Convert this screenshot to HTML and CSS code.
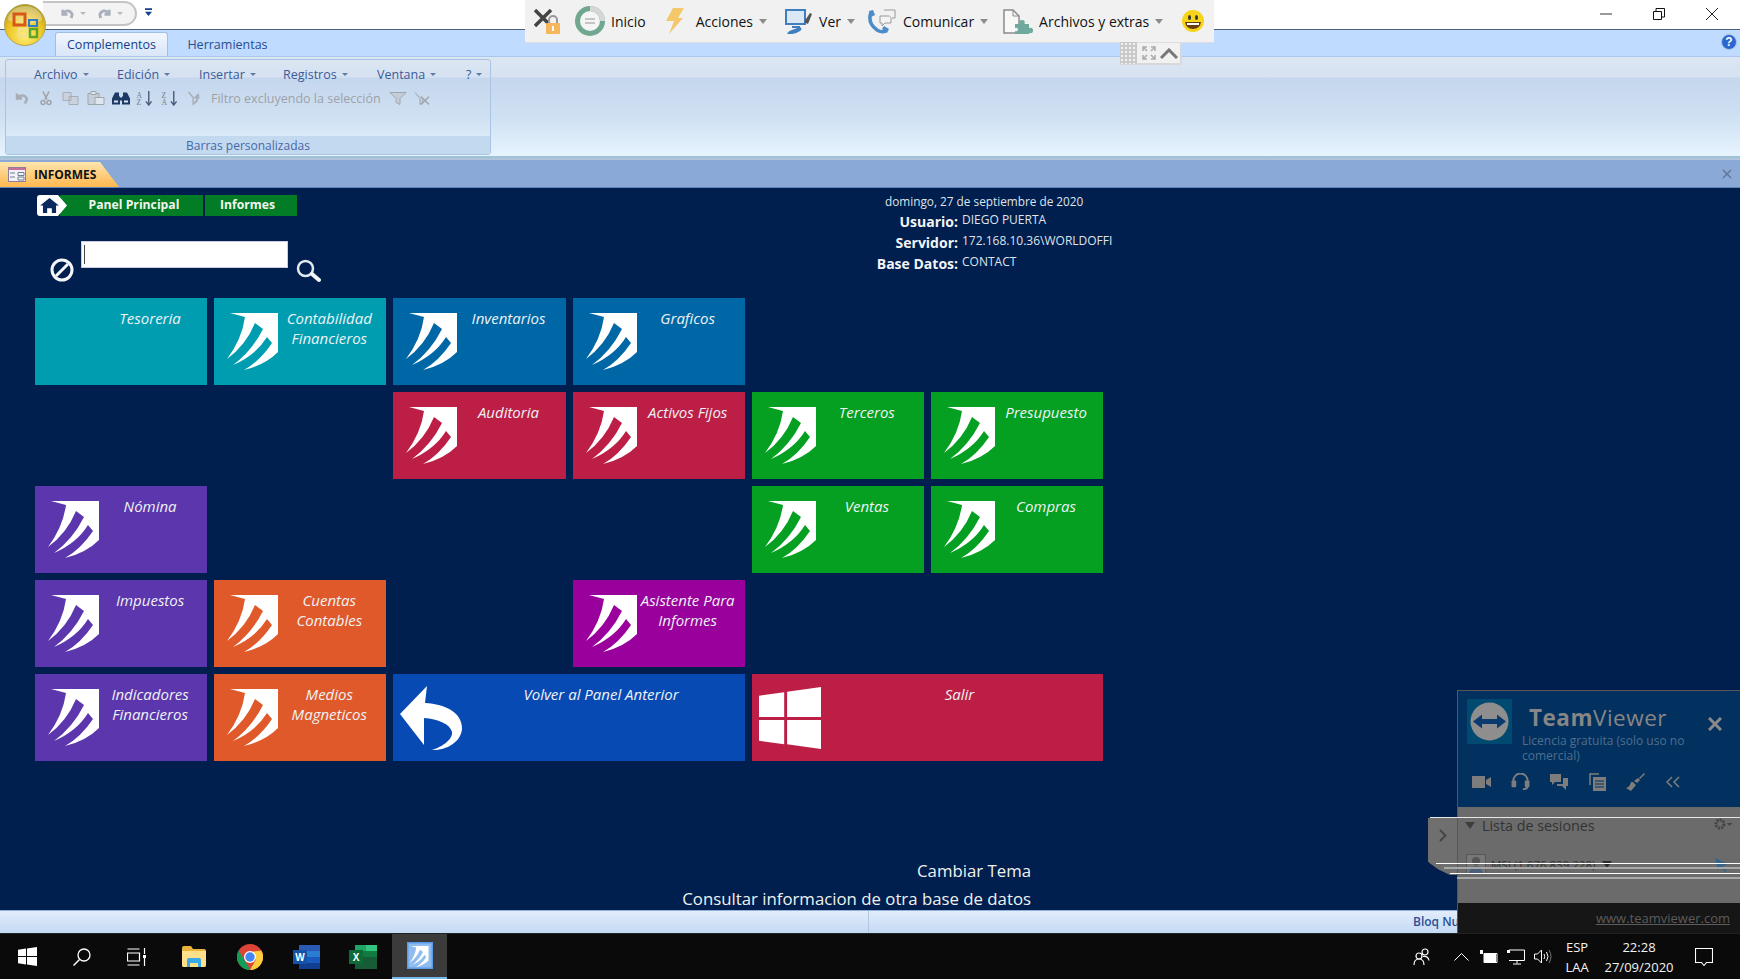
FILE: index.html
```html
<!DOCTYPE html>
<html lang="es">
<head>
<meta charset="utf-8">
<title>Informes</title>
<link rel="stylesheet" href="styles.css">
</head>
<body>
<svg class="defs" width="0" height="0" aria-hidden="true">
  <symbol id="wo" viewBox="0 0 70 70">
    <path fill="#fff" d="M10 8H58V47Q45 60 24 65Q40 56 52 38L47 32Q36 50 13 60Q32 46 43 24L35 18Q26 40 7 54Q22 34 25 12Z"/>
  </symbol>
</svg>

<header class="titlebar">
  <div class="qat">
    <svg class="qat-i" viewBox="0 0 16 16"><path fill="none" stroke="#a9b0bb" stroke-width="3" d="M3 4v5h5M3.500 8.500C6 4 11 4 13 9l-1 4"/></svg>
    <span class="qat-c"></span>
    <svg class="qat-i qat-r" viewBox="0 0 16 16"><path fill="none" stroke="#a9b0bb" stroke-width="3" d="M13 4v5H8M12.500 8.500C10 4 5 4 3 9l1 4"/></svg>
    <span class="qat-c"></span>
  </div>
  <svg class="qat-more" viewBox="0 0 8 10"><path fill="#15428b" d="M0 0h8v2H0zM0 4h8L4 9z"/></svg>
  <div class="winbtns">
    <svg viewBox="0 0 12 12"><path stroke="#777" stroke-width="1.500" d="M0 6h12"/></svg>
    <svg viewBox="0 0 12 12"><path fill="none" stroke="#111" d="M.5 3.500h8v8h-8zM3 3V.5h8.500V9H9"/></svg>
    <svg viewBox="0 0 12 12"><path stroke="#222" d="M0 0l12 12M12 0L0 12"/></svg>
  </div>
</header>

<section class="ribbon">
  <nav class="tabs">
    <span class="tab on">Complementos</span>
    <span class="tab">Herramientas</span>
    <svg class="help" viewBox="0 0 16 16"><circle cx="8" cy="8" r="7.500" fill="#2c67cf" stroke="#a9c4e6"/><text x="8" y="12" text-anchor="middle" class="help-t">?</text></svg>
  </nav>
  <div class="panel">
    <div class="group">
      <div class="grp-body">
        <div class="menus">
          <span class="m m1">Archivo</span><span class="m m2">Edición</span><span class="m m3">Insertar</span><span class="m m4">Registros</span><span class="m m5">Ventana</span><span class="m m6">?</span>
        </div>
        <div class="tools">
          <svg class="t tw14" viewBox="0 0 14 14"><path fill="none" stroke="#a8adb5" stroke-width="2.500" d="M2 2v5h5M2.500 6.500C5 3 10 3 12 7.500L10 12"/></svg>
          <svg class="t tw12 ml11" viewBox="0 0 12 14"><path fill="none" stroke="#a0a4aa" stroke-width="1.600" d="M3 0l4 8M9 0L5 8"/><circle cx="3" cy="11" r="2" fill="none" stroke="#a0a4aa" stroke-width="1.500"/><circle cx="9" cy="11" r="2" fill="none" stroke="#a0a4aa" stroke-width="1.500"/></svg>
          <svg class="t tw17 ml10" viewBox="0 0 17 14"><path fill="#c9d2de" stroke="#a8adb5" d="M1 1h8v8H1zM7 5h9v8H7z"/></svg>
          <svg class="t tw18 ml8" viewBox="0 0 18 14"><path fill="#c5cfdb" stroke="#a0a5ac" d="M1 2h11v11H1z"/><path fill="#dfe6ee" stroke="#a0a5ac" d="M8 6h9v7H8zM4 0h5v3H4z"/></svg>
          <svg class="t tw18 ml7" viewBox="0 0 18 14"><path fill="#1d3a66" d="M3 1h4v4h1v8H0V7zM11 1h4l3 6v6h-8V5h1zM8 6h2v3H8z"/><path fill="#dbe5f2" d="M2 9h4v2H2zM12 9h4v2h-4z"/></svg>
          <svg class="t tw18 ml6" viewBox="0 0 18 16"><text x="0" y="7" class="az">A</text><text x="0" y="15" class="az">Z</text><path stroke="#4a5e7c" stroke-width="1.500" fill="none" d="M13 0v14M10 11l3 4 3-4"/></svg>
          <svg class="t tw18 ml7" viewBox="0 0 18 16"><text x="0" y="7" class="az">Z</text><text x="0" y="15" class="az">A</text><path stroke="#4a5e7c" stroke-width="1.500" fill="none" d="M13 0v14M10 11l3 4 3-4"/></svg>
          <svg class="t tw17 ml8" viewBox="0 0 17 16"><path fill="none" stroke="#a8adb5" stroke-width="1.500" d="M1 1l5 6v7l4-3V7l2-3M12 3l-4 4h4l-4 5"/></svg>
          <span class="flt">Filtro excluyendo la selección</span>
          <svg class="t tw18 ml8" viewBox="0 0 18 14"><path fill="#c5cdd8" stroke="#9fa6af" d="M1 1h16l-6 6v6l-4-2V7z"/></svg>
          <svg class="t tw16 ml7" viewBox="0 0 16 14"><path fill="#c5cdd8" stroke="#9fa6af" d="M1 1l5 6v6l3-2V7"/><path stroke="#9fa6af" stroke-width="1.500" d="M7 5l8 8M15 5l-8 8"/></svg>
        </div>
      </div>
      <div class="grp-label">Barras personalizadas</div>
    </div>
  </div>
</section>

<div class="docstrip">
  <div class="doctab">
    <svg class="doc-i" viewBox="0 0 18 15"><rect x=".5" y=".5" width="17" height="14" fill="#f3f1f6" stroke="#8c7f9c"/><path fill="#c96fa0" d="M1 1h16v2H1z"/><path stroke="#6f7f96" d="M2 6h5M2 10h5"/><path fill="none" stroke="#6f7f96" d="M10 5.500h6v3h-6zM10 10h6v3h-6z"/></svg>
    <span>INFORMES</span>
  </div>
  <svg class="doc-x" viewBox="0 0 10 10"><path stroke="#5f7493" stroke-width="1.400" d="M1 1l8 8M9 1L1 9"/></svg>
</div>

<main class="main">
  <div class="head">
    <div class="head-l">
      <div class="crumbs">
        <span class="home"><svg viewBox="0 0 20 16"><path fill="#0a2a5e" d="M10 0l10 8h-3v8h-4.500v-5h-5v5H3V8H0z"/></svg></span>
        <span class="crumb c-p">Panel Principal</span>
        <span class="crumb c-i">Informes</span>
      </div>
      <div class="search">
        <svg class="s-clear" viewBox="0 0 24 24"><circle cx="12" cy="12" r="10" fill="none" stroke="#f4f6f8" stroke-width="3"/><path stroke="#f4f6f8" stroke-width="3" d="M6 18L18 6"/></svg>
        <div class="s-input"><span class="caret"></span></div>
        <svg class="s-glass" viewBox="0 0 25 24"><circle cx="9.500" cy="9.500" r="7.500" fill="none" stroke="#e3e8ee" stroke-width="2.500"/><path stroke="#f2f4f6" stroke-width="4" stroke-linecap="round" d="M16 15l7 6"/></svg>
      </div>
    </div>
    <div class="info">
      <div class="date">domingo, 27 de septiembre de 2020</div>
      <div class="k">Usuario:</div><div class="v">DIEGO PUERTA</div>
      <div class="k">Servidor:</div><div class="v">172.168.10.36\WORLDOFFICE</div>
      <div class="k">Base Datos:</div><div class="v">CONTACT</div>
    </div>
  </div>

  <div class="tiles">
    <a class="tile teal noicon c1 r1"><span class="lbl">Tesoreria</span></a>
    <a class="tile teal c2 r1"><svg class="ico"><use href="#wo"/></svg><span class="lbl">Contabilidad<br>Financieros</span></a>
    <a class="tile blue c3 r1"><svg class="ico"><use href="#wo"/></svg><span class="lbl">Inventarios</span></a>
    <a class="tile blue c4 r1"><svg class="ico"><use href="#wo"/></svg><span class="lbl">Graficos</span></a>

    <a class="tile red c3 r2"><svg class="ico"><use href="#wo"/></svg><span class="lbl">Auditoria</span></a>
    <a class="tile red c4 r2"><svg class="ico"><use href="#wo"/></svg><span class="lbl">Activos Fijos</span></a>
    <a class="tile green c5 r2"><svg class="ico"><use href="#wo"/></svg><span class="lbl">Terceros</span></a>
    <a class="tile green c6 r2"><svg class="ico"><use href="#wo"/></svg><span class="lbl">Presupuesto</span></a>

    <a class="tile purple c1 r3"><svg class="ico"><use href="#wo"/></svg><span class="lbl">Nómina</span></a>
    <a class="tile green c5 r3"><svg class="ico"><use href="#wo"/></svg><span class="lbl">Ventas</span></a>
    <a class="tile green c6 r3"><svg class="ico"><use href="#wo"/></svg><span class="lbl">Compras</span></a>

    <a class="tile purple c1 r4"><svg class="ico"><use href="#wo"/></svg><span class="lbl">Impuestos</span></a>
    <a class="tile orange c2 r4"><svg class="ico"><use href="#wo"/></svg><span class="lbl">Cuentas<br>Contables</span></a>
    <a class="tile magenta c4 r4"><svg class="ico"><use href="#wo"/></svg><span class="lbl">Asistente Para<br>Informes</span></a>

    <a class="tile purple c1 r5"><svg class="ico"><use href="#wo"/></svg><span class="lbl">Indicadores<br>Financieros</span></a>
    <a class="tile orange c2 r5"><svg class="ico"><use href="#wo"/></svg><span class="lbl">Medios<br>Magneticos</span></a>
    <a class="tile cobalt c3 w2 r5"><svg class="ico big" viewBox="0 0 62 64"><path fill="#fff" d="M27 0L0 28l24 31 0-27c14 1 26 6 28 14c1 8-12 16-21 18c16 1 31-9 31-22C62 27 46 18 25 17Z"/></svg><span class="lbl">Volver al Panel Anterior</span></a>
    <a class="tile red c5 w2 r5"><svg class="ico big" viewBox="0 0 64 64"><path fill="#fff" d="M0 9l26-3.500V31H0zM29 5L64 0v31H29zM0 34h26v25L0 55.500zM29 34h35v30l-35-5z"/></svg><span class="lbl">Salir</span></a>
  </div>

  <div class="links">
    <a class="lnk">Cambiar Tema</a>
    <a class="lnk">Consultar informacion de otra base de datos</a>
  </div>
</main>

<footer class="status">
  <span class="st-a"></span>
  <span class="st-b">Bloq Nu</span>
</footer>

<div class="taskbar">
  <svg class="tb w-start" viewBox="0 0 19 19"><path fill="#fff" d="M0 2.700l8-1.100v7.400H0zM9 1.400L19 0v9H9zM0 10h8v7.400l-8-1.100zM9 10h10v9L9 17.600z"/></svg>
  <svg class="tb w-search" viewBox="0 0 18 18"><circle cx="11" cy="7" r="6" fill="none" stroke="#fff" stroke-width="1.300"/><path stroke="#fff" stroke-width="1.500" d="M6.500 11.500L.5 17.500"/></svg>
  <svg class="tb w-task" viewBox="0 0 19 18"><path fill="none" stroke="#fff" stroke-width="1.200" d="M.5 1h12M.5 5h12v8H.5zM.5 17h12M17.500 0v6M17.500 10v8"/><rect x="16" y="7" width="3" height="3" fill="#fff"/></svg>
  <svg class="tb w-folder" viewBox="0 0 24 21"><path fill="#e8b43c" d="M0 2q0-2 2-2h7l2 3h11q2 0 2 2v14q0 2-2 2H2q-2 0-2-2z"/><path fill="#ffe08a" d="M0 5h24v14q0 2-2 2H2q-2 0-2-2z"/><path fill="#38a8e8" d="M5 14q0-2 2-2h10q2 0 2 2v7h-3v-4H8v4H5z"/></svg>
  <svg class="tb w-chrome" viewBox="0 0 26 26"><circle cx="13" cy="13" r="13" fill="#db4437"/><path fill="#0f9d58" d="M13 26A13 13 0 0 1 1.700 6.500L7.500 16.500l6 9.500z"/><path fill="#ffcd40" d="M24.300 6.500A13 13 0 0 1 13 26l6-10.500-6-7.500z"/><circle cx="13" cy="13" r="6" fill="#fff"/><circle cx="13" cy="13" r="4.700" fill="#4285f4"/></svg>
  <svg class="tb w-word" viewBox="0 0 27 24"><path fill="#2a5ab4" d="M6 0h21v6H6z"/><path fill="#2b7cd3" d="M6 6h21v6H6z"/><path fill="#185abd" d="M6 12h21v6H6z"/><path fill="#103f91" d="M6 18h21v6H6z"/><rect y="5" width="14" height="14" fill="#1553a8"/><text x="7" y="16" text-anchor="middle" class="app-t">W</text></svg>
  <svg class="tb w-excel" viewBox="0 0 28 24"><path fill="#21a366" d="M6 0h22v6H6z"/><path fill="#107c41" d="M6 6h22v6H6z"/><path fill="#185c37" d="M6 12h22v12H6z"/><path fill="#33c481" d="M17 0h11v6H17z"/><rect y="5" width="14" height="14" fill="#0d6b3a"/><text x="7" y="16" text-anchor="middle" class="app-t">X</text></svg>
  <div class="tb-active"><svg class="wo-task" viewBox="0 0 26 27"><rect width="26" height="27" fill="#5b9be8"/><rect x="1.500" y="1.500" width="23" height="24" fill="#8fbcf0"/><svg x="0" y="1" width="26" height="26" viewBox="0 0 70 70"><use href="#wo" width="70" height="70"/></svg></svg></div>

  <div class="tray">
    <svg class="tr w-people" viewBox="0 0 17 17"><g fill="none" stroke="#fff" stroke-width="1.200"><circle cx="12" cy="4" r="3"/><circle cx="6" cy="8" r="3"/><path d="M1 17q0-6 5-6t5 6M10 8.500q5-1 6 4"/></g></svg>
    <svg class="tr w-chev" viewBox="0 0 15 9"><path fill="none" stroke="#fff" d="M.5 8.500l7-7 7 7"/></svg>
    <svg class="tr w-bat" viewBox="0 0 18 13"><path fill="none" stroke="#fff" d="M4 3.500h13v9H4z"/><rect x="4" y="4" width="12" height="8" fill="#fff"/><rect y="0" width="3" height="4" fill="#fff"/></svg>
    <svg class="tr w-net" viewBox="0 0 18 16"><path fill="none" stroke="#fff" d="M2 1h15.500v10.500H2M10 11.500v3M6 15h8"/><rect x="0" y="1" width="3" height="3" fill="#fff"/></svg>
    <svg class="tr w-vol" viewBox="0 0 18 15"><path fill="none" stroke="#fff" d="M.5 5h3l4-4v13l-4-4h-3zM10 5q1.500 2.500 0 5M12.500 3q3 4.500 0 9"/><path fill="none" stroke="#777" d="M15 1q4 6.500 0 13"/></svg>
    <div class="lang"><span>ESP</span><span>LAA</span></div>
    <div class="clock"><span>22:28</span><span>27/09/2020</span></div>
    <svg class="tr w-note" viewBox="0 0 18 18"><path fill="none" stroke="#fff" stroke-width="1.100" d="M.5.500h17v14h-6l-2.500 3-2.500-3h-6z"/></svg>
  </div>
</div>

<!-- elementos superpuestos -->
<svg class="orb" viewBox="0 0 42 42">
  <defs>
    <radialGradient id="og" cx=".5" cy=".75" r=".8"><stop offset="0" stop-color="#fff07a"/><stop offset=".55" stop-color="#eec422"/><stop offset="1" stop-color="#9f8c1c"/></radialGradient>
  </defs>
  <circle cx="21" cy="21" r="20.500" fill="url(#og)" stroke="#b5a455"/>
  <path fill="#fff" opacity=".35" d="M4 16a17 14 0 0 1 34 0q-17 8-34 0z"/>
  <path fill="none" stroke="#d8581a" stroke-width="3" d="M10 10h11v11H10z"/>
  <path fill="none" stroke="#2c7fc4" stroke-width="2.200" d="M25 16h8v6h-8z"/>
  <path fill="none" stroke="#f2e08a" stroke-width="2.500" d="M15 25h8v7h-8z"/>
  <path fill="none" stroke="#5aa62c" stroke-width="2.500" d="M26 25h7v8h-7z"/>
</svg>

<div class="remote">
  <svg class="rm i-lock" viewBox="0 0 26 25"><path stroke="#444" stroke-width="3.500" d="M1 1l16 16M17 1L1 17"/><rect x="12" y="14" width="14" height="11" rx="1" fill="#f5b65c"/><path fill="none" stroke="#999" stroke-width="2" d="M15 14v-3a4 4 0 0 1 8 0v3"/><rect x="18" y="17" width="2" height="5" fill="#fff"/></svg>
  <svg class="rm i-ring" viewBox="0 0 30 30"><circle cx="15" cy="15" r="12.500" fill="#f5f5f5" stroke="#6fa88e" stroke-width="5"/><path fill="none" stroke="#d6d6d6" stroke-width="5" d="M15 2.500a12.500 12.500 0 0 1 12.500 12.500"/><path stroke="#b5b5b5" stroke-width="1.500" d="M10 13h10M10 17h10"/></svg>
  <span class="rt r-inicio">Inicio</span>
  <svg class="rm i-bolt" viewBox="0 0 18 26"><path fill="#f4c76a" d="M7 0h11l-6 10h5L3 26l5-13H0z"/></svg>
  <span class="rt r-acc">Acciones</span><span class="rc"></span>
  <svg class="rm i-ver" viewBox="0 0 27 25"><path fill="#dbe7f2" stroke="#3f7fc0" stroke-width="2" d="M1 1h19v14H1z"/><path stroke="#3f7fc0" stroke-width="2" d="M7 18h8"/><path fill="#555" d="M19 13l6-9 2 1-4 10z"/><path fill="#3f7fc0" d="M2 25q1-3 5-4l8-3q3 2 0 4-6 4-13 3z"/></svg>
  <span class="rt r-ver">Ver</span><span class="rc"></span>
  <svg class="rm i-tel" viewBox="0 0 29 25"><path fill="none" stroke="#4c8cc8" stroke-width="3.500" d="M4 3Q0 14 10 21q5 3 9 1"/><path fill="#4c8cc8" d="M2 2l4-1 2 5-4 2zM15 20l2-3 5 3-2 4z"/><path fill="#f3f3f3" stroke="#999" d="M13 7h11v7h-6l-3 3v-3h-2z"/><path fill="#f3f3f3" stroke="#999" d="M17 1h11v8h-3"/></svg>
  <span class="rt r-com">Comunicar</span><span class="rc"></span>
  <svg class="rm i-file" viewBox="0 0 30 25"><path fill="#f8f8f8" stroke="#8a8a8a" stroke-width="1.500" d="M1 1h9l6 6v17H1z"/><path fill="none" stroke="#8a8a8a" d="M10 1v6h6"/><path fill="#6fa89c" d="M12 15h4.500q-1-4 2.500-4t2.500 4H26v4q4-1 4 2.500T26 24v1H12v-3q3 1 3-1.500T12 19z"/></svg>
  <span class="rt r-arc">Archivos y extras</span><span class="rc"></span>
  <svg class="rm i-smile" viewBox="0 0 22 22"><circle cx="11" cy="11" r="11" fill="#f7d31a"/><ellipse cx="7.500" cy="7.500" rx="1.500" ry="2.500" fill="#333"/><ellipse cx="14.500" cy="7.500" rx="1.500" ry="2.500" fill="#333"/><path fill="#6b3b10" d="M3 12h16q-1 7-8 7t-8-7z"/><path fill="#fff" d="M5 13h12v2H5z"/></svg>
</div>
<div class="handle">
  <span class="grip"></span>
  <svg class="h-exp" viewBox="0 0 14 14"><path fill="none" stroke="#aaa" stroke-width="1.500" d="M1 5V1h4M9 1h4v4M13 9v4H9M5 13H1V9M1 1l4 4M13 1L9 5M13 13L9 9M1 13l4-4"/></svg>
  <svg class="h-up" viewBox="0 0 18 11"><path fill="none" stroke="#777" stroke-width="3" d="M1 10l8-8 8 8"/></svg>
</div>

<aside class="tv">
  <div class="tv-head">
    <div class="tv-top">
      <svg class="tv-logo" viewBox="0 0 45 45"><rect width="45" height="45" fill="#004a72"/><circle cx="22.500" cy="22.500" r="19" fill="#8e8e8e"/><path fill="#0b3a6e" d="M6 22.500l9-7v4.500h15v-4.500l9 7-9 7V25H15v4.500z"/></svg>
      <div class="tv-title"><b>Team</b>Viewer</div>
      <svg class="tv-x" viewBox="0 0 14 14"><path stroke="#8a8a8a" stroke-width="3" d="M1 1l12 12M13 1L1 13"/></svg>
    </div>
    <p class="tv-lic">Licencia gratuita (solo uso no comercial)</p>
    <div class="tv-ico">
      <svg viewBox="0 0 19 14"><path fill="#7d7d7d" d="M0 1h13v12H0zM14 5l5-3v10l-5-3z"/></svg>
      <svg viewBox="0 0 19 19"><path fill="none" stroke="#7d7d7d" stroke-width="2" d="M2 11V8a7.500 7.500 0 0 1 15 0v3M17 12v2q0 3-5 3"/><rect y="8" width="5" height="7" rx="1" fill="#7d7d7d"/><rect x="14" y="8" width="5" height="7" rx="1" fill="#7d7d7d"/></svg>
      <svg viewBox="0 0 19 18"><path fill="#7d7d7d" d="M1 1h11v8H6l-3 3V9H1zM14 5h5v8h-2v4l-4-4H8v-2h6z"/></svg>
      <svg viewBox="0 0 17 18"><path fill="none" stroke="#7d7d7d" stroke-width="1.500" d="M1 12V1h9"/><path fill="#7d7d7d" d="M4 4h13v14H4z"/><path stroke="#04305f" d="M6 8h9M6 11h9M6 14h9"/></svg>
      <svg viewBox="0 0 19 18"><path fill="#7d7d7d" d="M13 5l5-5 1 1-5 5zM12 5l2 2-3 3-3-2zM7 9l3 3-5 6-5-3q4-1 5-6z"/></svg>
      <svg viewBox="0 0 14 12"><path fill="none" stroke="#7d7d7d" stroke-width="1.500" d="M6 1L1 6l5 5M13 1L8 6l5 5"/></svg>
    </div>
  </div>
  <div class="tv-body">
    <div class="tv-sec"><span class="tv-tri"></span><span>Lista de sesiones</span>
      <svg class="tv-gear" viewBox="0 0 18 12"><circle cx="6" cy="6" r="4" fill="none" stroke="#444" stroke-width="3" stroke-dasharray="2 1"/><path fill="#444" d="M13 5h5l-2.500 3z"/></svg>
    </div>
    <div class="tv-row">
      <svg class="tv-av" viewBox="0 0 20 20"><rect x=".5" y=".5" width="19" height="19" fill="#777" stroke="#555"/><circle cx="10" cy="7" r="4" fill="#555"/><path fill="#4a6078" d="M3 19q1-7 7-7t7 7z"/></svg>
      <span class="tv-name">MSI (1 676 839 228)</span><span class="tv-tri2"></span>
      <svg class="tv-cur" viewBox="0 0 13 14"><path fill="#35648f" d="M0 0l13 6-5 2 4 5-2 1-4-5-3 3z"/></svg>
    </div>
  </div>
  <div class="tv-foot"><a class="tv-url">www.teamviewer.com</a></div>
</aside>
<div class="tv-tab"><svg viewBox="0 0 8 13"><path fill="none" stroke="#444" stroke-width="1.800" d="M1 1l5.500 5.500L1 12"/></svg></div>
<span class="gl g1"></span><span class="gl g2"></span><span class="gl g3"></span><span class="gl g4"></span><span class="gl g5"></span>
</body>
</html>
```
FILE: styles.css
```css
* { box-sizing: border-box; }
html, body { margin: 0; padding: 0; }
body {
  width: 1740px; height: 979px; overflow: hidden; position: relative;
  display: flex; flex-direction: column;
  font-family: "Open Sans", "Liberation Sans", sans-serif;
  background: #001e4e;
}
svg { display: block; flex: none; }
.defs { position: absolute; }

/* barra de titulo */
.titlebar { height: 30px; flex: none; background: #fff; border-bottom: 1px solid #4d6078; display: flex; align-items: center; padding-left: 43px; }
.qat { width: 94px; height: 25px; margin-top: -3px; padding-left: 17px; border: 2px solid #c4c4c4; border-left: 0; border-radius: 0 13px 13px 0; background: #f3f3f3; display: flex; align-items: center; }
.qat-i { width: 15px; height: 15px; }
.qat-r { margin-left: 11px; }
.qat-c { width: 0; height: 0; margin-left: 5px; border: 3px solid transparent; border-top: 3px solid #b7b7b7; border-bottom: 0; }
.qat-more { width: 7px; height: 9px; margin-left: 8px; margin-top: -4px; }
.winbtns { margin-left: auto; margin-top: -2px; padding-right: 22px; display: flex; gap: 41px; }
.winbtns svg { width: 12px; height: 12px; }

/* cinta */
.ribbon { flex: none; height: 128px; background: #bfdbff; }
.tabs { height: 26px; padding-left: 55px; padding-top: 2px; display: flex; align-items: stretch; position: relative; }
.tab { width: 113px; font-size: 12.500px; color: #2a4d8f; display: flex; align-items: center; justify-content: center; margin-right: 3px; }
.tab.on { background: linear-gradient(#f2f7fe, #d8e6f7); border: 1px solid #9fbfe6; border-bottom: 0; border-radius: 3px 3px 0 0; color: #15428b; }
.help { width: 16px; height: 16px; position: absolute; right: 3px; top: 4px; }
.help-t { font: bold 12px "Liberation Sans", sans-serif; fill: #fff; }
.panel { height: 102px; padding: 2px 0 0 5px; border-top: 1px solid #a9c8ee; background: linear-gradient(#dce6f3 0, #d6e2f1 20px, #c5d7ed 21px, #cfe0f3 60%, #e6f4fe 100%); border-bottom: 2px solid #9ec3d8; }
.group { width: 486px; height: 96px; border: 1px solid #a8c4e2; border-radius: 3px; display: flex; flex-direction: column; }
.grp-body { flex: 1; position: relative; }
.grp-label { height: 18px; background: #c3d9f0; color: #4668a8; font-size: 12px; line-height: 20px; text-align: center; }
.menus { display: flex; height: 24px; padding-top: 4px; align-items: center; padding-left: 28px; }
.m { font-size: 12.500px; color: #3a5a98; white-space: nowrap; display: flex; align-items: center; }
.m::after { content: ""; width: 0; height: 0; margin-left: 5px; border: 3px solid transparent; border-top: 3px solid #607aa8; border-bottom: 0; }
.m1 { width: 83px; }
.m2 { width: 82px; }
.m3 { width: 84px; }
.m4 { width: 94px; }
.m5 { width: 89px; }
.tools { display: flex; align-items: center; padding-left: 9px; height: 26px; margin-top: 1px; }
.t { height: 15px; }
.tw12 { width: 12px; } .tw14 { width: 14px; } .tw16 { width: 16px; } .tw17 { width: 17px; } .tw18 { width: 18px; }
.ml6 { margin-left: 6px; } .ml7 { margin-left: 7px; } .ml8 { margin-left: 8px; } .ml10 { margin-left: 10px; } .ml11 { margin-left: 11px; }
.flt { margin-left: 7px; color: #9da2a8; font-size: 12.500px; white-space: nowrap; }
.az { font: 8px "Liberation Serif", serif; fill: #6f7a8a; }

/* pestaña documento */
.docstrip { flex: none; height: 30px; padding-top: 4px; background: #8aa9d6; border-top: 2px solid #b2c3dc; border-bottom: 1px solid #5f86bb; display: flex; align-items: flex-end; position: relative; }
.doctab { width: 119px; height: 25px; padding-left: 8px; display: flex; align-items: center; gap: 8px; background: linear-gradient(#ffe5ae, #ffb74e); clip-path: polygon(0 0, 100px 0, 119px 100%, 0 100%); font-size: 12px; font-weight: 700; color: #111; }
.doc-i { width: 18px; height: 15px; }
.doc-x { width: 10px; height: 10px; position: absolute; right: 8px; top: 9px; }

/* principal */
.main { flex: none; height: 722px; padding: 7px 0 0 35px; background: #001e4e; }
.head { height: 103px; display: flex; }
.head-l { width: 838px; }
.crumbs { display: flex; padding-left: 2px; height: 21px; }
.home { width: 30px; height: 21px; background: #fff; border-radius: 3px 0 0 3px; clip-path: polygon(0 0, 21px 0, 30px 50%, 21px 100%, 0 100%); display: flex; align-items: center; padding-left: 3px; position: relative; z-index: 1; }
.home svg { width: 19px; height: 15px; }
.crumb { height: 21px; padding-bottom: 2px; background: #037c26; color: #f1f6ee; font-size: 12.200px; font-weight: 700; display: flex; align-items: center; justify-content: center; }
.c-p { width: 143px; margin-left: -7px; margin-right: 2px; padding-left: 5px; }
.c-i { width: 92px; padding-right: 7px; }
.search { position: relative; height: 50px; margin-top: 25px; padding-left: 15px; display: flex; align-items: flex-start; }
.s-clear { width: 24px; height: 24px; margin-top: 17px; }
.s-input { width: 207px; height: 27px; margin-left: 7px; background: #fff; border: 1px solid #ccd; padding: 3px 2px; }
.caret { display: block; width: 1px; height: 19px; background: #444; }
.s-glass { width: 25px; height: 24px; margin-left: 8px; margin-top: 18px; }
.info { width: 239px; height: 90px; margin-top: -3px; display: grid; grid-template-columns: 85px 150px; grid-template-rows: 19px 21px 21px 21px; column-gap: 4px; color: #dfe4ea; font-size: 12px; }
.date { grid-column: 1 / 3; padding-left: 12px; font-size: 11.800px; line-height: 18px; white-space: nowrap; }
.k { font-weight: 700; font-size: 14px; color: #f2f4f6; text-align: right; white-space: nowrap; line-height: 22px; }
.v { white-space: nowrap; overflow: hidden; line-height: 18px; }

/* mosaicos */
.tiles { display: grid; grid-template-columns: repeat(6, 172.200px); grid-template-rows: repeat(5, 87px); gap: 7px; }
.tile { display: flex; padding: 8px 6px 0; color: #eef2f5; overflow: hidden; }
.noicon { padding-left: 60px; }
.ico { width: 70px; height: 70px; margin-right: -16px; margin-top: -1px; }
.ico.big { width: 62px; height: 64px; margin: 4px -3px 0 1px; }
.lbl { flex: 1; font-style: italic; font-size: 15px; line-height: 19.500px; text-align: center; white-space: nowrap; padding: 3px 0 0 4px; }
.teal { background: #009db1; }
.blue { background: #0067a6; }
.red { background: #bc1e45; }
.green { background: #05a021; }
.purple { background: #5c36ac; }
.orange { background: #e0592a; }
.magenta { background: #99009c; }
.cobalt { background: #084ab3; }
.c1 { grid-column: 1; } .c2 { grid-column: 2; } .c3 { grid-column: 3; } .c4 { grid-column: 4; } .c5 { grid-column: 5; } .c6 { grid-column: 6; }
.w2 { grid-column-end: span 2; }
.r1 { grid-row: 1; } .r2 { grid-row: 2; } .r3 { grid-row: 3; } .r4 { grid-row: 4; } .r5 { grid-row: 5; }

.links { width: 996px; margin-top: 96px; display: flex; flex-direction: column; align-items: flex-end; color: #eef3ee; font-size: 16.800px; line-height: 28px; white-space: nowrap; }

/* estado */
.status { flex: none; height: 23px; background: linear-gradient(#e2edfb, #c4d9f4); border-top: 1px solid #8fb0da; display: flex; align-items: center; }
.st-a { width: 869px; height: 100%; border-right: 1px solid #b5c8e2; }
.st-b { margin-left: 544px; margin-top: -2px; font-size: 12px; font-weight: 600; color: #2c4f94; white-space: nowrap; }

/* barra de tareas */
.taskbar { flex: none; height: 46px; background: #0a0a0a; border-top: 1px solid #222; display: flex; align-items: center; position: relative; color: #fff; }
.tb { flex: none; }
.w-start { width: 19px; height: 19px; margin-left: 18px; }
.w-search { width: 18px; height: 18px; margin-left: 36px; }
.w-task { width: 19px; height: 18px; margin-left: 36px; }
.w-folder { width: 24px; height: 21px; margin-left: 36px; }
.w-chrome { width: 26px; height: 26px; margin-left: 31px; }
.w-word { width: 27px; height: 24px; margin-left: 30px; }
.w-excel { width: 28px; height: 24px; margin-left: 29px; }
.tb-active { width: 55px; height: 45px; margin-left: 15px; background: #3b3b3b; border-bottom: 2px solid #76b9ed; display: flex; align-items: center; justify-content: center; }
.wo-task { width: 26px; height: 27px; }
.app-t { font: bold 10px "Liberation Sans", sans-serif; fill: #fff; }
.tray { margin-left: auto; display: flex; align-items: center; padding-right: 27px; }
.w-people { width: 17px; height: 17px; }
.w-chev { width: 15px; height: 9px; margin-left: 24px; }
.w-bat { width: 18px; height: 13px; margin-left: 11px; }
.w-net { width: 18px; height: 16px; margin-left: 9px; }
.w-vol { width: 18px; height: 15px; margin-left: 9px; }
.lang, .clock { display: flex; flex-direction: column; align-items: center; font-size: 13px; line-height: 20px; color: #f2f2f2; }
.lang { width: 30px; margin-left: 10px; }
.clock { width: 76px; margin-left: 9px; }
.w-note { width: 18px; height: 18px; margin-left: 18px; }

/* superpuestos */
.orb { position: absolute; left: 4px; top: 4px; width: 42px; height: 42px; }
.remote { position: absolute; left: 525px; top: 0; width: 689px; height: 43px; background: #f1f1f1; border-bottom: 1px solid #ddd; display: flex; align-items: center; padding-left: 9px; color: #111; font-size: 14px; }
.rm { height: 25px; }
.rt { white-space: nowrap; }
.rc { width: 0; height: 0; margin-left: 6px; border: 4.500px solid transparent; border-top: 5px solid #8c8c8c; border-bottom: 0; }
.i-lock { width: 26px; }
.i-ring { width: 30px; height: 30px; margin-left: 15px; }
.r-inicio { margin-left: 6px; }
.i-bolt { width: 18px; height: 26px; margin-left: 20px; }
.r-acc { margin-left: 12px; }
.i-ver { width: 27px; margin-left: 18px; }
.r-ver { margin-left: 7px; }
.i-tel { width: 29px; margin-left: 12px; }
.r-com { margin-left: 7px; }
.i-file { width: 30px; margin-left: 15px; }
.r-arc { margin-left: 6px; }
.i-smile { width: 22px; height: 22px; margin-left: 19px; }
.handle { position: absolute; left: 1120px; top: 43px; width: 62px; height: 22px; background: #f1f1f1; border: 2px solid #d8d8d8; border-top: 0; border-left: 0; display: flex; align-items: center; }
.grip { width: 17px; height: 22px; background-color: #c9c9c9; background-image: radial-gradient(circle, #f3f3f3 1.200px, transparent 1.300px); background-size: 4px 4px; }
.h-exp { width: 14px; height: 14px; margin-left: 5px; }
.h-up { width: 18px; height: 11px; margin-left: 4px; }

.tv { position: absolute; left: 1457px; top: 690px; width: 283px; height: 243px; display: flex; flex-direction: column; background: #6b6b6b; border-left: 1px solid #565656; border-top: 1px solid #565656; }
.tv-head { height: 116px; background: #02305f; padding: 8px 0 0 9px; flex: none; }
.tv-top { display: flex; align-items: flex-start; height: 34px; }
.tv-logo { width: 45px; height: 45px; }
.tv-title { margin-left: 17px; margin-top: 4px; font-size: 22.500px; line-height: 30px; color: #868686; letter-spacing: .5px; font-weight: 400; }
.tv-title b { font-weight: 700; }
.tv-x { width: 14px; height: 14px; margin-left: 41px; margin-top: 18px; }
.tv-lic { margin: 0 0 0 55px; width: 190px; font-size: 12px; line-height: 15px; color: #4f6f8d; height: 32px; }
.tv-ico { display: flex; align-items: center; gap: 19.500px; margin-top: 8px; padding-left: 5px; }
.tv-ico svg { width: 19px; height: 18px; }
.tv-ico svg:last-child { width: 14px; height: 12px; margin-left: 1px; }
.tv-body { flex: 1; }
.tv-sec { display: flex; align-items: center; height: 20px; margin-top: 8px; padding-left: 7px; color: #333; font-size: 14.300px; position: relative; }
.tv-tri { width: 0; height: 0; margin-right: 7px; border: 5px solid transparent; border-top: 7px solid #3d3d3d; border-bottom: 0; }
.tv-gear { width: 18px; height: 12px; position: absolute; right: 8px; top: 3px; }
.tv-row { display: flex; align-items: center; margin-top: 19px; padding-left: 8px; height: 20px; font-size: 11.500px; color: #333; position: relative; }
.tv-av { width: 20px; height: 20px; }
.tv-name { margin-left: 5px; white-space: nowrap; }
.tv-tri2 { width: 0; height: 0; margin-left: 7px; border: 5px solid transparent; border-top: 7px solid #2a2a2a; border-bottom: 0; }
.tv-cur { width: 13px; height: 14px; position: absolute; right: 12px; top: 4px; }
.tv-foot { height: 30px; flex: none; background: #161616; display: flex; align-items: center; justify-content: flex-end; padding-right: 10px; }
.tv-url { font-size: 13px; color: #5c5c5c; text-decoration: underline; }
.tv-tab { position: absolute; left: 1428px; top: 818px; width: 29px; height: 57px; background: #6f6f6f; clip-path: polygon(0 0, 100% 0, 100% 100%, 75% 100%, 35% 90%, 5% 79%, 0 76%); padding: 11px 0 0 11px; }
.tv-tab svg { width: 8px; height: 13px; }
.gl { position: absolute; height: 1px; right: 0; background: #e8e8e8; }
.g1 { left: 1430px; top: 817px; }
.g2 { left: 1436px; top: 863px; background: #fff; }
.g3 { left: 1444px; top: 867px; height: 2px; background: #a8a8a8; }
.g4 { left: 1450px; top: 873px; background: #fff; }
.g5 { left: 1457px; top: 877px; height: 2px; background: #a8a8a8; }
```
